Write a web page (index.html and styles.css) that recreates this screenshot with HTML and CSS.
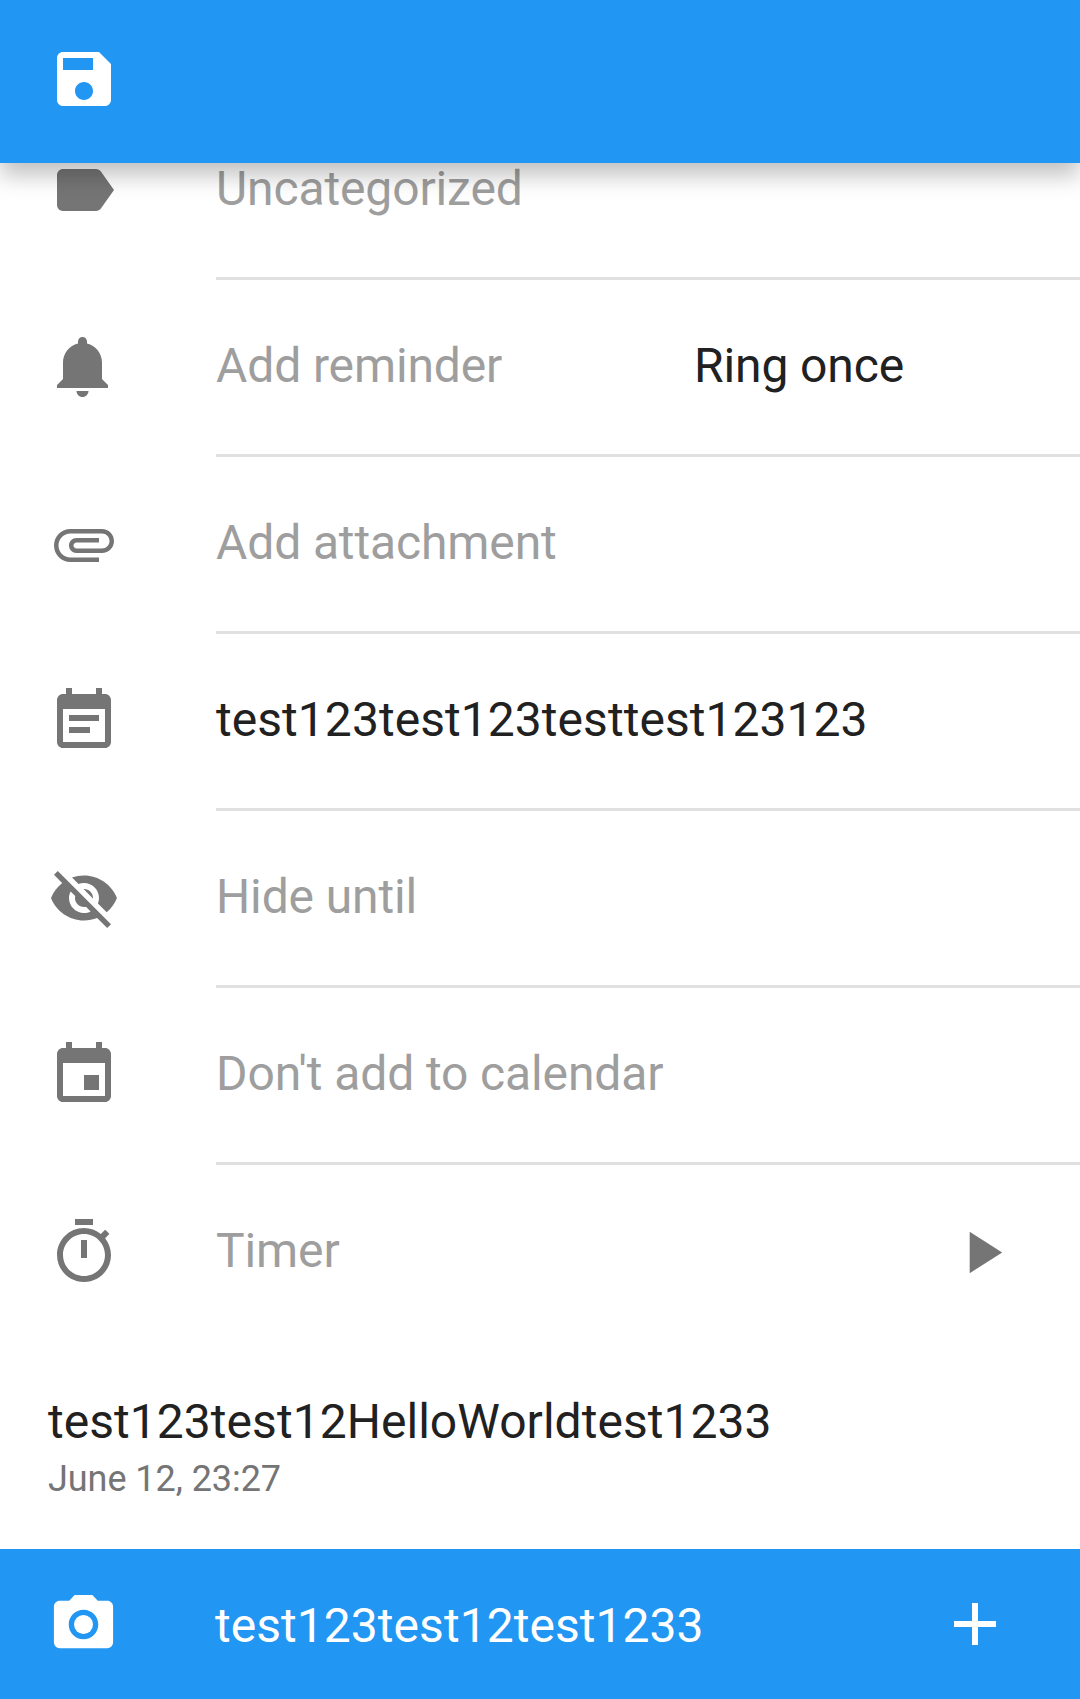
FILE: index.html
```html
<!DOCTYPE html>
<html lang="en">
<head>
<meta charset="utf-8">
<title>Edit task</title>
<link rel="stylesheet" href="styles.css">
</head>
<body>
<div class="screen">
  <header class="app-bar">
    <svg class="icon" viewBox="0 0 24 24"><path d="M17 3H5c-1.11 0-2 .9-2 2v14c0 1.1.89 2 2 2h14c1.1 0 2-.9 2-2V7l-4-4zm-5 16c-1.66 0-3-1.34-3-3s1.34-3 3-3 3 1.34 3 3-1.34 3-3 3zm3-10H5V5h10v4z"/></svg>
  </header>
  <main class="content">
    <section class="row">
      <svg class="icon" viewBox="0 0 24 24"><path d="M17.63 5.84C17.27 5.33 16.67 5 16 5L5 5.01C3.9 5.01 3 5.9 3 7v10c0 1.1.9 1.99 2 1.99L16 19c.67 0 1.27-.33 1.63-.84L22 12l-4.37-6.16z"/></svg>
      <div class="field"><span class="text">Uncategorized</span></div>
    </section>
    <section class="row">
      <svg class="icon" viewBox="0 0 24 24"><path d="M11.5 22c1.1 0 2-.9 2-2h-4c0 1.1.9 2 2 2zm6.5-6v-5.5c0-3.07-2.13-5.64-5-6.32V3.5c0-.83-.67-1.5-1.5-1.5S10 2.67 10 3.5v.68c-2.87.68-5 3.25-5 6.32V16l-2 2v1h17v-1l-2-2z"/></svg>
      <div class="field field-split"><span class="text">Add reminder</span><span class="text text-choice">Ring once</span></div>
    </section>
    <section class="row">
      <svg class="icon" viewBox="0 0 24 24"><path d="M7.5 18C4.46 18 2 15.54 2 12.5S4.46 7 7.5 7H18c2.21 0 4 1.79 4 4s-1.79 4-4 4H9.5C8.12 15 7 13.88 7 12.5S8.12 10 9.5 10H17v1.5H9.5c-.55 0-1 .45-1 1s.45 1 1 1H18c1.38 0 2.5-1.12 2.5-2.5S19.38 8.5 18 8.5H7.5c-2.21 0-4 1.79-4 4s1.79 4 4 4H17V18H7.5z"/></svg>
      <div class="field"><span class="text">Add attachment</span></div>
    </section>
    <section class="row">
      <svg class="icon" viewBox="0 0 24 24"><path d="M17 10H7v2h10v-2zm2-7h-1V1h-2v2H8V1H6v2H5c-1.11 0-1.99.9-1.99 2L3 19c0 1.1.89 2 2 2h14c1.1 0 2-.9 2-2V5c0-1.1-.9-2-2-2zm0 16H5V8h14v11zm-5-5H7v2h7v-2z"/></svg>
      <div class="field"><span class="text text-set">test123test123testtest123123</span></div>
    </section>
    <section class="row">
      <svg class="icon" viewBox="0 0 24 24"><path d="M12 7c2.76 0 5 2.24 5 5 0 .65-.13 1.26-.36 1.83l2.92 2.92c1.51-1.26 2.7-2.89 3.43-4.75-1.73-4.39-6-7.5-11-7.5-1.4 0-2.74.25-3.98.7l2.16 2.16C10.74 7.13 11.35 7 12 7zM2 4.27l2.28 2.28.46.46C3.08 8.3 1.78 10.02 1 12c1.73 4.39 6 7.5 11 7.5 1.55 0 3.03-.3 4.38-.84l.42.42L19.73 22 21 20.73 3.27 3 2 4.27zM7.53 9.8l1.55 1.55c-.05.21-.08.43-.08.65 0 1.66 1.34 3 3 3 .22 0 .44-.03.65-.08l1.55 1.55c-.67.33-1.41.53-2.2.53-2.76 0-5-2.24-5-5 0-.79.2-1.53.53-2.2zm4.31-.78l3.15 3.15.02-.16c0-1.66-1.34-3-3-3l-.17.01z"/></svg>
      <div class="field"><span class="text">Hide until</span></div>
    </section>
    <section class="row">
      <svg class="icon" viewBox="0 0 24 24"><path d="M17 12h-5v5h5v-5zM16 1v2H8V1H6v2H5c-1.11 0-1.99.9-1.99 2L3 19c0 1.1.89 2 2 2h14c1.1 0 2-.9 2-2V5c0-1.1-.9-2-2-2h-1V1h-2zm3 18H5V8h14v11z"/></svg>
      <div class="field"><span class="text">Don't add to calendar</span></div>
    </section>
    <section class="row row-last">
      <svg class="icon" viewBox="0 0 24 24"><path d="M15 1H9v2h6V1zm-4 13h2V8h-2v6zm8.03-6.61l1.42-1.42c-.43-.51-.9-.99-1.41-1.41l-1.42 1.42C16.07 4.74 14.12 4 12 4c-4.97 0-9 4.03-9 9s4.02 9 9 9 9-4.03 9-9c0-2.12-.74-4.07-1.97-5.61zM12 20c-3.87 0-7-3.13-7-7s3.13-7 7-7 7 3.13 7 7-3.13 7-7 7z"/></svg>
      <div class="field"><span class="text">Timer</span><svg class="icon play" viewBox="0 0 24 24"><path d="M8 5v14l11-7z"/></svg></div>
    </section>
    <article class="comment">
      <p class="comment-text">test123test12HelloWorldtest1233</p>
      <p class="comment-date">June 12, 23:27</p>
    </article>
  </main>
  <footer class="comment-bar">
    <svg class="icon camera" viewBox="0 0 24 24"><circle cx="12" cy="12" r="3.2"/><path d="M9 2L7.17 4H4c-1.1 0-2 .9-2 2v12c0 1.1.9 2 2 2h16c1.1 0 2-.9 2-2V6c0-1.1-.9-2-2-2h-3.17L15 2H9zm3 15c-2.76 0-5-2.24-5-5s2.24-5 5-5 5 2.24 5 5-2.24 5-5 5z"/></svg>
    <span class="comment-input">test123test12test1233</span>
    <svg class="icon add" viewBox="0 0 24 24"><path d="M19 13h-6v6h-2v-6H5v-2h6V5h2v6h6v2z"/></svg>
  </footer>
</div>
</body>
</html>
```
FILE: styles.css
```css
* {
  box-sizing: border-box;
}

body {
  margin: 0;
  background: #fff;
  font-family: Roboto, sans-serif;
  font-size: 48px;
  line-height: 56px;
  letter-spacing: 0.04px;
  color: #212121;
}

.screen {
  display: flex;
  flex-direction: column;
  width: 1080px;
  height: 1699px;
  overflow: hidden;
}

.icon {
  display: block;
  flex: none;
  width: 72px;
  height: 72px;
  fill: #757575;
}

.app-bar {
  position: relative;
  z-index: 1;
  flex: none;
  height: 163px;
  padding: 43px 48px 0;
  background: #2196f3;
  box-shadow: 0 12px 22px rgba(0, 0, 0, 0.25);
}

.app-bar .icon,
.comment-bar .icon {
  fill: #fff;
}

/* The list is scrolled, so its first row slides beneath the app bar. */
.content {
  flex: 1;
  margin-top: -60px;
}

.row {
  display: flex;
  gap: 96px;
  height: 177px;
  padding-left: 48px;
}

.row > .icon {
  margin-top: 51px;
}

.field {
  display: flex;
  flex: 1;
  align-items: center;
  justify-content: space-between;
  border-bottom: 3px solid #e0e0e0;
}

.field-split {
  display: grid;
  grid-template-columns: 478px 1fr;
}

.row-last .field {
  border-bottom-color: transparent;
}

.text {
  padding-bottom: 2px;
  letter-spacing: -0.12px;
  color: #9e9e9e;
}

.text-choice {
  color: #212121;
}

.text-set {
  letter-spacing: 0.05px;
  color: #212121;
}

.play {
  width: 71px;
  height: 71px;
  margin-right: 63px;
}

.comment {
  padding: 52px 48px 0;
}

.comment-text,
.comment-date {
  margin: 0;
}

.comment-date {
  font-size: 36px;
  line-height: 42px;
  padding-top: 8px;
  letter-spacing: -0.05px;
  color: #757575;
}

.comment-bar {
  display: flex;
  flex: none;
  align-items: center;
  height: 150px;
  padding: 0 69px 0 48px;
  background: #2196f3;
  color: #fff;
}

.comment-bar .camera {
  width: 71px;
  height: 71px;
}

.comment-input {
  flex: 1;
  padding: 3px 0 0 96px;
}
```
